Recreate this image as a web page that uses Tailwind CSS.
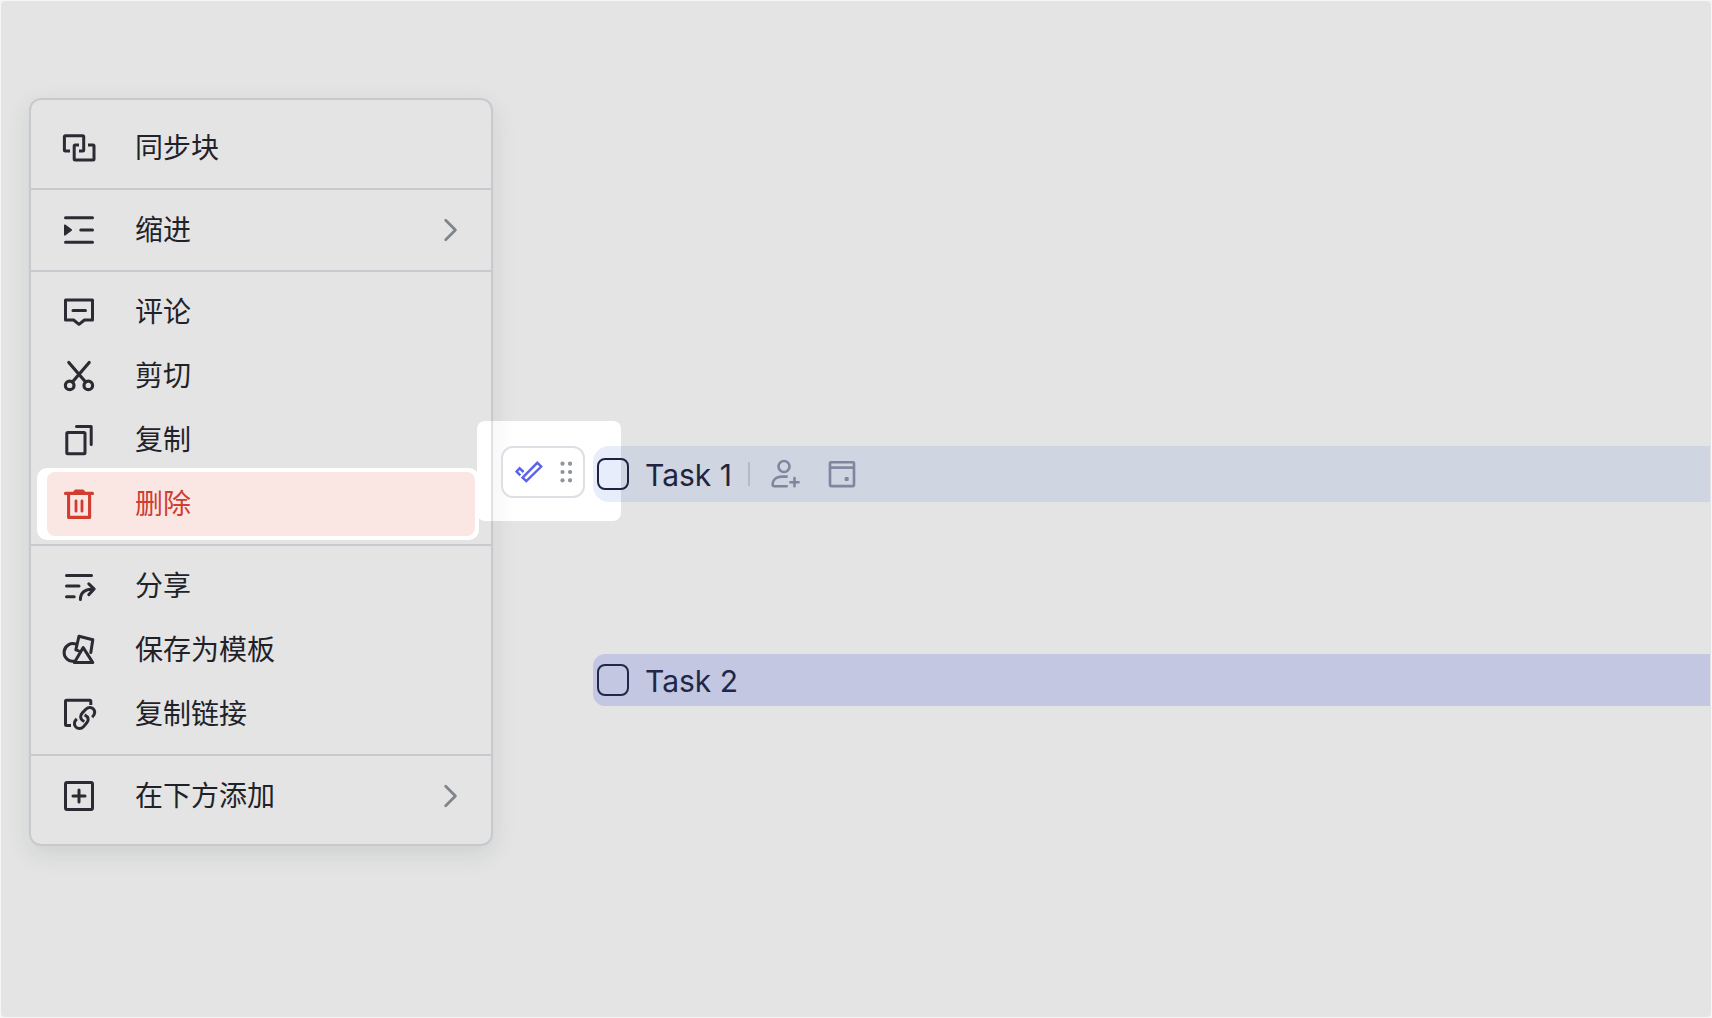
<!DOCTYPE html>
<html lang="zh-CN">
<head>
    <meta charset="UTF-8">
    <meta name="viewport" content="width=device-width, initial-scale=1.0">
    <title>Task menu</title>
    <script src="https://cdn.jsdelivr.net/npm/@tailwindcss/browser@4"></script>
</head>
<body class="bg-[#f6f6f6] min-h-screen p-px flex font-['Inter','Noto_Sans_CJK_SC',sans-serif] text-[#1f2329]">
    <main class="flex-1 flex items-start bg-[#e4e4e4] rounded-sm">
        <!-- block menu -->
        <nav aria-label="Block menu" class="w-[464px] shrink-0 ml-7 mt-[97px] rounded-xl border-2 border-[#c8c9ce] text-[28px] leading-10 shadow-[0_8px_24px_rgba(31,55,45,0.11)]">
            <div class="px-4 pt-4 pb-2">
                <button type="button" class="w-full h-16 px-3.5 flex items-center gap-[38px]">
                    <svg class="size-9" viewBox="0 0 36 36" fill="none" stroke="#2b2b33" stroke-width="3" stroke-linejoin="round"><path d="M9 21H4.4Q3.4 21 3.4 20V6.7Q3.4 5.7 4.4 5.7H21.7Q22.7 5.7 22.7 6.7V20Q22.7 21 21.7 21H18"/><path d="M18 14.9H14.2Q13.2 14.9 13.2 15.9V29.1Q13.2 30.1 14.2 30.1H32Q33 30.1 33 29.1V15.9Q33 14.9 32 14.9H27"/></svg>
                    <span>同步块</span>
                </button>
            </div>
            <div class="px-4 py-2 border-t-2 border-[#c8c9ce]">
                <button type="button" class="w-full h-16 px-3.5 flex items-center gap-[38px]">
                    <svg class="size-9" viewBox="0 0 36 36" fill="none" stroke="#2b2b33" stroke-width="3" stroke-linecap="round"><path d="M4.5 5.7H31.5M19.8 18H31.5M4.5 30.3H31.5"/><path d="M3.8 13.2L10.2 18L3.8 22.8Z" fill="#2b2b33" stroke-width="1.6" stroke-linejoin="round"/></svg>
                    <span>缩进</span>
                    <svg class="size-6 ml-auto" viewBox="0 0 24 24" fill="none" stroke="#80858c" stroke-width="2.8" stroke-linecap="round" stroke-linejoin="round"><path d="M8.7 2.3L18.4 12L8.7 21.7"/></svg>
                </button>
            </div>
            <div class="px-4 py-2 border-t-2 border-[#c8c9ce]">
                <button type="button" class="w-full h-16 px-3.5 flex items-center gap-[38px]">
                    <svg class="size-9" viewBox="0 0 36 36" fill="none" stroke="#2b2b33" stroke-width="3" stroke-linecap="round" stroke-linejoin="round"><path d="M4.5 6.1H31.5V26H23.4L18 30.3L12.6 26H4.5Z"/><path d="M12 16.4H24.5"/></svg>
                    <span>评论</span>
                </button>
                <button type="button" class="w-full h-16 px-3.5 flex items-center gap-[38px]">
                    <svg class="size-9" viewBox="0 0 36 36" fill="none" stroke="#2b2b33" stroke-width="3.2" stroke-linecap="round"><circle cx="8.7" cy="27.4" r="4.3"/><circle cx="27.3" cy="27.4" r="4.3"/><path d="M7.8 4.5L24.6 24M28.2 4.5L11.4 24"/></svg>
                    <span>剪切</span>
                </button>
                <button type="button" class="w-full h-16 px-3.5 flex items-center gap-[38px]">
                    <svg class="size-9" viewBox="0 0 36 36" fill="none" stroke="#2b2b33" stroke-width="3" stroke-linecap="round" stroke-linejoin="round"><rect x="5.8" y="10.6" width="18.2" height="21.2" rx="1"/><path d="M15.5 4.5H30.2V22.5"/></svg>
                    <span>复制</span>
                </button>
                <div class="relative">
                    <div class="absolute -left-2.5 -right-1 -top-1 -bottom-1 bg-white rounded-[10px]"></div>
                    <button type="button" class="relative w-full h-16 px-3.5 flex items-center gap-[38px] rounded-lg bg-[#fae7e4] text-[#d13d30]">
                        <svg class="size-9" viewBox="0 0 36 36" fill="none" stroke="currentColor" stroke-width="3.1" stroke-linecap="round" stroke-linejoin="round"><path d="M4.5 7.4H31.5M7.6 7.4V31.4H28.6V7.4"/><path d="M15 14.8V25.2M21 14.8V25.2" stroke-width="2.8"/><path d="M12.8 6.5L14.2 4.5H22.2L23.6 6.5Z" fill="currentColor" stroke-width="1.8"/></svg>
                        <span>删除</span>
                    </button>
                </div>
            </div>
            <div class="px-4 py-2 border-t-2 border-[#c8c9ce]">
                <button type="button" class="w-full h-16 px-3.5 flex items-center gap-[38px]">
                    <svg class="size-9" viewBox="0 0 36 36" fill="none" stroke="#2b2b33" stroke-width="3" stroke-linecap="round" stroke-linejoin="round"><path d="M5.5 7.4H30.5M5.5 18H18M5.5 28.7H13.2"/><path d="M19.4 31.5C19.4 25 23 21 33 21M27.8 15.8L33.2 21L27.8 26.6"/></svg>
                    <span>分享</span>
                </button>
                <button type="button" class="w-full h-16 px-3.5 flex items-center gap-[38px]">
                    <svg class="size-9" viewBox="0 0 36 36" fill="none" stroke="#2b2b33" stroke-width="3" stroke-linecap="round" stroke-linejoin="round"><path d="M15 12.2A8.8 8.8 0 1 0 12.6 29.2"/><path d="M17.6 18.8L14.8 17.8L18 4.2L31.8 7.8L29.8 20.5"/><path d="M22.2 15.6L13.4 30.6H31.8Z"/></svg>
                    <span>保存为模板</span>
                </button>
                <button type="button" class="w-full h-16 px-3.5 flex items-center gap-[38px]">
                    <svg class="size-9" viewBox="0 0 36 36" fill="none" stroke="#2b2b33" stroke-width="3" stroke-linejoin="round"><path d="M10 29.6H5.5Q4.5 29.6 4.5 28.6V5.3Q4.5 4.3 5.5 4.3H28.8Q29.8 4.3 29.8 5.3V9"/><path d="M23.3 25.5C18.8 23.5 18.8 19.5 21.6 16.6L24.8 13.3C27.6 10.5 31.6 11.1 33 13.7C34.4 16.3 33.6 18.9 31.2 21.3"/><path d="M23.6 18.8C27.8 20.8 28 24.2 25.8 26.8L22.6 30.6C20.2 33.4 16.2 33.1 14.4 30.5C12.7 28 13.3 25.3 15.8 22.9"/></svg>
                    <span>复制链接</span>
                </button>
            </div>
            <div class="px-4 pt-2 pb-4 border-t-2 border-[#c8c9ce]">
                <button type="button" class="w-full h-16 px-3.5 flex items-center gap-[38px]">
                    <svg class="size-9" viewBox="0 0 36 36" fill="none" stroke="#2b2b33" stroke-width="3" stroke-linecap="round"><rect x="4.5" y="4.5" width="27" height="27" rx="1.5"/><path d="M12 18H24M18 12V24"/></svg>
                    <span>在下方添加</span>
                    <svg class="size-6 ml-auto" viewBox="0 0 24 24" fill="none" stroke="#80858c" stroke-width="2.8" stroke-linecap="round" stroke-linejoin="round"><path d="M8.7 2.3L18.4 12L8.7 21.7"/></svg>
                </button>
            </div>
        </nav>

        <!-- task list -->
        <section class="flex-1 ml-[100px] mr-px pt-[445px] flex flex-col gap-[152px] text-[30px] leading-10 text-[#1f2440]">
            <div class="relative h-14">
                <!-- highlighted handle area, the menu edge shows through -->
                <div class="absolute -left-[116px] -top-[25px] w-36 h-[100px] rounded-lg bg-white overflow-hidden">
                    <div class="ml-3.5 w-6 h-full border-l-2 border-[#dfdfe5] bg-linear-to-r from-[#f8f8f8] to-white"></div>
                </div>
                <div class="absolute -left-[92px] top-0 w-[84px] h-[52px] pl-3 pr-[11px] flex items-center justify-between rounded-xl border-2 border-[#dedfe4] bg-white">
                    <button type="button" aria-label="Task block">
                        <svg class="w-7 h-6" viewBox="0 0 28 24" fill="none" stroke="#5a63ea" stroke-width="2.4"><path d="M7.6 17.7L22.3 2.8L26.2 6.5L11.3 21.2Z"/><path d="M5.4 15.4L1.6 11.6L4.6 8.3L8.6 12"/></svg>
                    </button>
                    <button type="button" aria-label="Drag">
                        <svg class="w-3 h-6" viewBox="0 0 12 24" fill="#8f939b"><circle cx="2.5" cy="3.7" r="2.1"/><circle cx="10" cy="3.7" r="2.1"/><circle cx="2.5" cy="12" r="2.1"/><circle cx="10" cy="12" r="2.1"/><circle cx="2.5" cy="20.3" r="2.1"/><circle cx="10" cy="20.3" r="2.1"/></svg>
                    </button>
                </div>
                <div class="relative h-full pl-1 flex items-center rounded-l-2xl bg-[linear-gradient(to_right,#e8edfc_28px,#cfd5e1_28px)]">
                    <input id="task-1" type="checkbox" class="appearance-none size-8 rounded-lg border-2 border-[#1f2340]">
                    <label for="task-1" class="ml-4 pt-0.5">Task 1</label>
                    <span class="ml-4 w-0.5 h-6 bg-[#b4bac9]"></span>
                    <button type="button" aria-label="Assign" class="ml-5">
                        <svg class="size-8" viewBox="0 0 32 32" fill="none" stroke="#7f86a0" stroke-width="2.6" stroke-linecap="round"><circle cx="14" cy="8.5" r="5.5"/><path d="M16.7 18.6H11.5C6 18.6 2.6 22 2.6 26.6Q2.6 28.2 4.4 28.2H16.7M20.4 24.2H28.6M24.5 20.1V28.3"/></svg>
                    </button>
                    <button type="button" aria-label="Due date" class="ml-6">
                        <svg class="size-8" viewBox="0 0 32 32" fill="none" stroke="#7f86a0" stroke-width="2.6"><rect x="4" y="4.3" width="24" height="23.8" rx="1"/><path d="M4 9.6H28"/><rect x="18.7" y="19" width="4" height="4" rx="1" fill="#7f86a0" stroke="none"/></svg>
                    </button>
                </div>
            </div>
            <div class="h-[52px] pl-1 flex items-center rounded-l-xl bg-[#c3c7e1] text-[#1f2848]">
                <input id="task-2" type="checkbox" class="appearance-none size-8 rounded-lg border-2 border-[#1f2848]">
                <label for="task-2" class="ml-4 pt-0.5">Task 2</label>
            </div>
        </section>
    </main>
</body>
</html>
